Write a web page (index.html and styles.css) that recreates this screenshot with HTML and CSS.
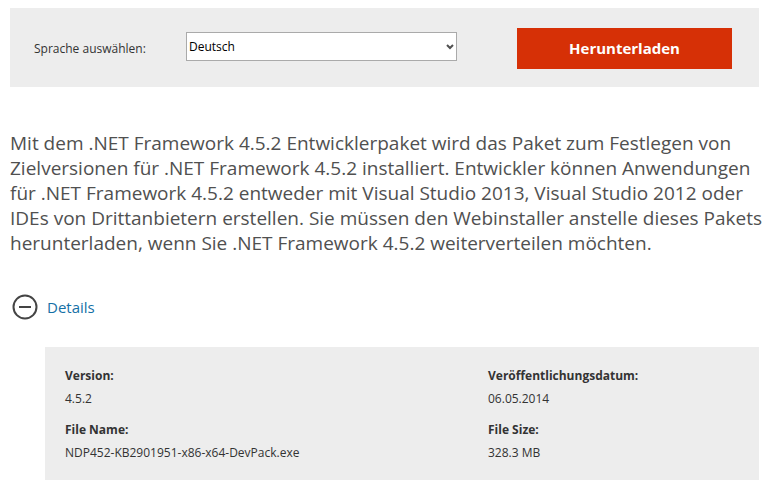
FILE: index.html
```html
<!DOCTYPE html>
<html lang="de">
<head>
  <meta charset="UTF-8">
  <meta name="viewport" content="width=device-width, initial-scale=1.0">
  <title>.NET Framework 4.5.2 Entwicklerpaket</title>
  <link rel="stylesheet" href="styles.css">
</head>
<body>
  <form class="download-bar">
    <label for="language">Sprache auswählen:</label>
    <div class="select-box">
      <select id="language">
        <option selected>Deutsch</option>
      </select>
      <svg class="arrow" viewBox="0 0 8 6" aria-hidden="true"><path d="M1 1l3 3 3-3" /></svg>
    </div>
    <button type="button" class="download">Herunterladen</button>
  </form>

  <p class="intro">
    Mit dem .NET Framework 4.5.2 Entwicklerpaket wird das Paket zum Festlegen von
    Zielversionen für .NET Framework 4.5.2 installiert. Entwickler können Anwendungen
    für .NET Framework 4.5.2 entweder mit Visual Studio 2013, Visual Studio 2012 oder
    IDEs von Drittanbietern erstellen. Sie müssen den Webinstaller anstelle dieses Pakets
    herunterladen, wenn Sie .NET Framework 4.5.2 weiterverteilen möchten.
  </p>

  <a class="toggle" href="#details">
    <svg viewBox="0 0 26 26" aria-hidden="true"><circle cx="13" cy="13" r="11.5" /><path d="M7 13h12" /></svg>
    <span>Details</span>
  </a>

  <dl class="details" id="details">
    <div>
      <dt>Version:</dt>
      <dd>4.5.2</dd>
    </div>
    <div>
      <dt>Veröffentlichungsdatum:</dt>
      <dd>06.05.2014</dd>
    </div>
    <div>
      <dt>File Name:</dt>
      <dd>NDP452-KB2901951-x86-x64-DevPack.exe</dd>
    </div>
    <div>
      <dt>File Size:</dt>
      <dd>328.3 MB</dd>
    </div>
  </dl>
</body>
</html>
```

FILE: styles.css
```css
body {
  font-family: "Segoe UI", "Open Sans", sans-serif;
  font-size: 12px;
  color: #333;
  background-color: #fff;
  margin: 0;
  padding: 8px 6px 12px 10px;
}

.download-bar {
  display: flex;
  align-items: center;
  background-color: #ededed;
  padding: 20px 27px 18px 24px;
}

.download-bar label {
  width: 152px;
}

.select-box {
  position: relative;
  width: 271px;
  margin-bottom: 4px;
}

.select-box select {
  display: block;
  width: 100%;
  height: 29px;
  padding: 0 2px;
  border: 1px solid #aaa;
  border-radius: 0;
  background-color: #fff;
  color: #000;
  font-family: inherit;
  font-size: 12px;
  appearance: none;
}

.arrow {
  position: absolute;
  right: 3px;
  top: 12px;
  width: 8px;
  height: 6px;
  fill: none;
  stroke: #505050;
  stroke-width: 2;
  pointer-events: none;
}

.download {
  width: 215px;
  height: 41px;
  margin-left: auto;
  padding: 0 0 2px;
  border: none;
  background-color: #d63006;
  color: #fff;
  font-family: inherit;
  font-size: 15px;
  font-weight: 700;
  cursor: pointer;
}

.intro {
  margin: 44px -6px 38px 0;
  font-size: 19px;
  line-height: 25px;
  color: #505050;
}

.toggle {
  display: inline-flex;
  align-items: center;
  gap: 9px;
  margin-left: 2px;
  color: #1570a6;
  font-size: 15px;
  text-decoration: none;
}

.toggle svg {
  width: 26px;
  height: 26px;
  fill: none;
  stroke: #444;
  stroke-width: 2;
}

.details {
  display: grid;
  grid-template-columns: 423px 1fr;
  row-gap: 8px;
  margin: 23px 0 0 35px;
  padding: 17px 20px 16px;
  background-color: #ededed;
  line-height: 23px;
}

.details dt {
  font-weight: 700;
}

.details dd {
  margin: 0;
}
```
